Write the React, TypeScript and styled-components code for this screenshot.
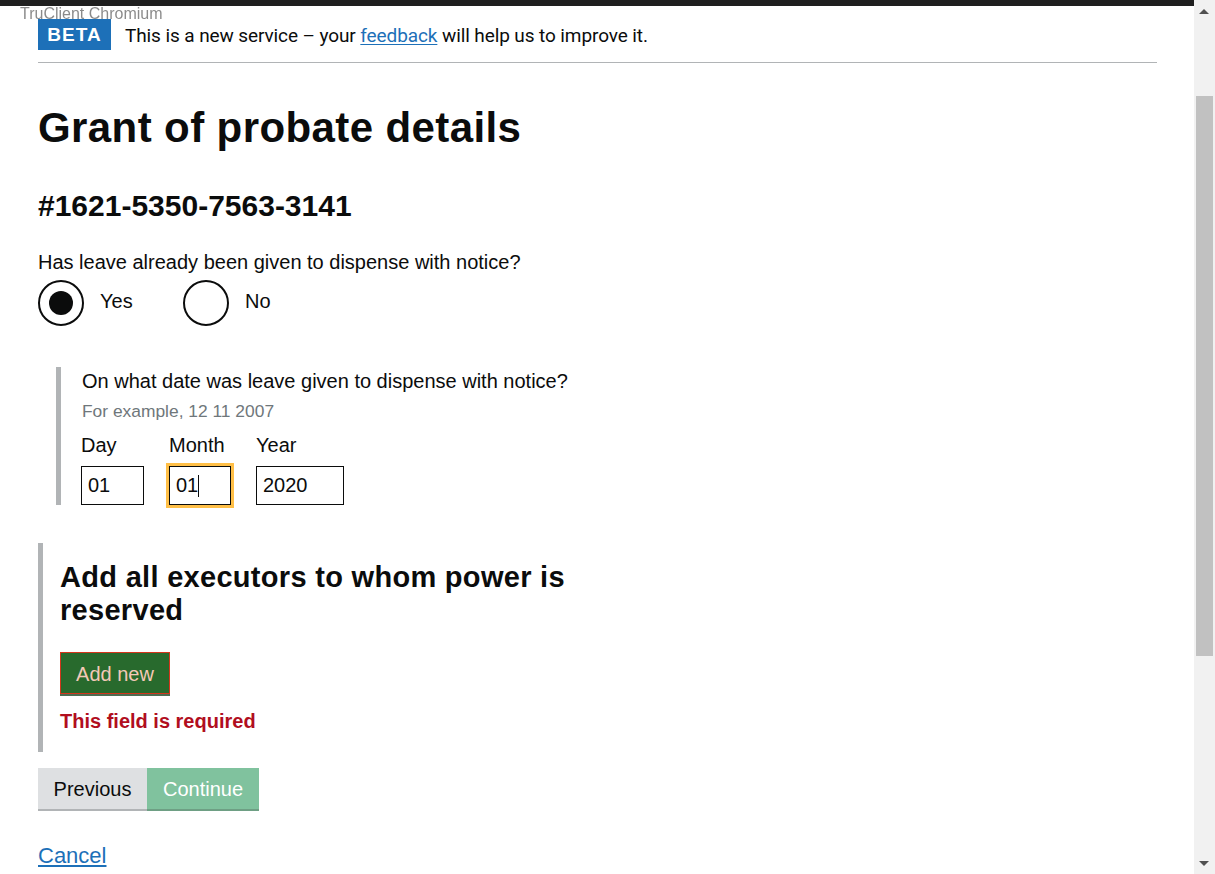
import React from "react";
import styled, { createGlobalStyle } from "styled-components";

const GlobalStyle = createGlobalStyle`
  html, body {
    margin: 0;
    padding: 0;
    background: #ffffff;
    overflow: hidden;
  }
  body {
    font-family: "Liberation Sans", Arial, sans-serif;
    color: #0b0c0c;
  }
  * { box-sizing: border-box; }
`;

const TopBar = styled.div`
  height: 6px;
  background: #1f1f1f;
`;

const Watermark = styled.div`
  position: fixed;
  left: 20px;
  top: 4px;
  font-family: "Liberation Sans", Arial, sans-serif;
  font-size: 16px;
  line-height: 20px;
  color: rgba(60, 60, 60, 0.6);
  pointer-events: none;
  z-index: 5;
`;

const Scrollbar = styled.div`
  position: fixed;
  top: 0;
  right: 0;
  width: 21px;
  height: 100vh;
  background: #f1f1f1;
  z-index: 10;
`;

const ScrollArrow = styled.div<{ $down?: boolean }>`
  position: absolute;
  left: 5px;
  ${(p) => (p.$down ? "bottom: 8px;" : "top: 9px;")}
  width: 0;
  height: 0;
  border-left: 5px solid transparent;
  border-right: 5px solid transparent;
  ${(p) =>
    p.$down
      ? "border-top: 5px solid #505050;"
      : "border-bottom: 5px solid #505050;"}
`;

const ScrollThumb = styled.div`
  position: absolute;
  left: 2px;
  top: 96px;
  width: 17px;
  height: 560px;
  background: #c1c1c1;
`;

const Page = styled.div`
  margin-right: 21px;
  padding: 0 37px 0 38px;
`;

const PhaseBanner = styled.div`
  display: flex;
  align-items: center;
  gap: 14px;
  padding: 13px 0 12px;
  border-bottom: 1px solid #b1b4b6;
`;

const Tag = styled.strong`
  display: inline-flex;
  align-items: center;
  justify-content: center;
  height: 31px;
  width: 73px;
  background: #1d70b8;
  color: #ffffff;
  font-family: "Liberation Sans", Arial, sans-serif;
  font-weight: 700;
  font-size: 19px;
  letter-spacing: 1px;
`;

const BannerText = styled.span`
  font-family: "Roboto", "Liberation Sans", sans-serif;
  font-size: 19px;
  line-height: 24px;
  letter-spacing: -0.1px;
  color: #0b0c0c;
  margin-top: 2px;
`;

const Link = styled.a`
  color: #1d70b8;
  text-decoration: underline;
  text-underline-offset: 2px;
`;

const H1 = styled.h1`
  margin: 40px 0 0;
  font-family: "Liberation Sans", Arial, sans-serif;
  font-weight: 700;
  font-size: 42px;
  line-height: 50px;
  letter-spacing: 0.4px;
`;

const CaseId = styled.h2`
  margin: 35px 0 0;
  font-weight: 700;
  font-size: 30px;
  line-height: 36px;
`;

const Question = styled.div`
  margin-top: 26px;
  font-size: 20px;
  line-height: 24px;
`;

const RadioRow = styled.div`
  display: flex;
  margin-top: 6px;
`;

const RadioItem = styled.label`
  display: flex;
  align-items: center;
  gap: 16px;
  min-width: 145px;
  font-size: 20px;
  line-height: 24px;
`;

const RadioCircle = styled.span<{ $checked?: boolean }>`
  width: 46px;
  height: 46px;
  border: 2px solid #0b0c0c;
  border-radius: 50%;
  display: flex;
  align-items: center;
  justify-content: center;
  &::after {
    content: "";
    width: 24px;
    height: 24px;
    border-radius: 50%;
    background: #0b0c0c;
    display: ${(p) => (p.$checked ? "block" : "none")};
  }
`;

const RadioText = styled.span`
  margin-top: -4px;
`;

const Conditional = styled.div`
  margin: 41px 0 0 18px;
  border-left: 5px solid #b1b4b6;
  padding-left: 20px;
`;

const FieldLabel = styled.div`
  padding-top: 2px;
  padding-left: 1px;
  font-size: 20px;
  line-height: 24px;
`;

const Hint = styled.div`
  margin-top: 7px;
  padding-left: 1px;
  font-size: 17.4px;
  line-height: 22px;
  color: #6f777b;
`;

const DateRow = styled.div`
  display: flex;
  margin-top: 11px;
`;

const DateItem = styled.div`
  display: flex;
  flex-direction: column;
  margin-right: 25px;
`;

const DateLabel = styled.label`
  font-size: 20px;
  line-height: 24px;
  margin-bottom: 9px;
`;

const InputWrap = styled.div`
  position: relative;
`;

const DateInput = styled.input<{ $w: number; $focused?: boolean }>`
  display: block;
  width: ${(p) => p.$w}px;
  height: 39px;
  border: 1px solid #0b0c0c;
  border-radius: 0;
  padding: 0 6px;
  font-family: "Liberation Sans", Arial, sans-serif;
  font-size: 20px;
  color: #0b0c0c;
  background: #fff;
  outline: ${(p) => (p.$focused ? "3px solid #ffbf47" : "none")};
  outline-offset: 0;
`;

const Caret = styled.span`
  position: absolute;
  left: 29px;
  top: 9px;
  width: 1px;
  height: 22px;
  background: #0b0c0c;
`;

const Section = styled.div`
  margin-top: 38px;
  border-left: 5px solid #b1b4b6;
  padding: 18px 0 19px 17px;
  width: 560px;
`;

const SectionHeading = styled.h2`
  margin: 0;
  font-weight: 700;
  font-size: 29px;
  line-height: 33px;
  letter-spacing: 0.3px;
`;

const AddButton = styled.button`
  margin-top: 25px;
  display: block;
  width: 110px;
  height: 42px;
  background: #286a2d;
  color: #f4c9b7;
  border: 1px solid #d4351c;
  box-shadow: 0 2px 0 #4f6b52;
  font-family: "Liberation Sans", Arial, sans-serif;
  font-size: 20px;
  padding: 2px 0 0;
  cursor: pointer;
`;

const ErrorText = styled.div`
  margin-top: 15px;
  font-weight: 700;
  font-size: 20px;
  line-height: 24px;
  color: #b10e1e;
`;

const NavRow = styled.div`
  display: flex;
  margin-top: 16px;
`;

const NavButton = styled.button<{ $primary?: boolean }>`
  height: 43px;
  width: ${(p) => (p.$primary ? 112 : 109)}px;
  border: 0;
  border-bottom: 2px solid ${(p) => (p.$primary ? "#6e9f84" : "#b1b4b6")};
  background: ${(p) => (p.$primary ? "#80c29e" : "#dee0e2")};
  color: ${(p) => (p.$primary ? "#ffffff" : "#0b0c0c")};
  font-family: "Liberation Sans", Arial, sans-serif;
  font-size: 20px;
  padding: 2px 0 0;
  cursor: pointer;
`;

const CancelLink = styled(Link)`
  display: inline-block;
  margin-top: 32px;
  font-size: 22px;
  line-height: 26px;
  text-decoration-thickness: 2px;
`;

export default function App() {
  return (
    <>
      <GlobalStyle />
      <TopBar />
      <Watermark>TruClient Chromium</Watermark>
      <Page>
        <PhaseBanner>
          <Tag>BETA</Tag>
          <BannerText>
            This is a new service – your <Link href="#">feedback</Link> will
            help us to improve it.
          </BannerText>
        </PhaseBanner>

        <H1>Grant of probate details</H1>
        <CaseId>#1621-5350-7563-3141</CaseId>

        <Question>Has leave already been given to dispense with notice?</Question>
        <RadioRow>
          <RadioItem>
            <RadioCircle $checked />
            <RadioText>Yes</RadioText>
          </RadioItem>
          <RadioItem>
            <RadioCircle />
            <RadioText>No</RadioText>
          </RadioItem>
        </RadioRow>

        <Conditional>
          <FieldLabel>On what date was leave given to dispense with notice?</FieldLabel>
          <Hint>For example, 12 11 2007</Hint>
          <DateRow>
            <DateItem>
              <DateLabel>Day</DateLabel>
              <DateInput $w={63} value="01" readOnly />
            </DateItem>
            <DateItem>
              <DateLabel>Month</DateLabel>
              <InputWrap>
                <DateInput $w={62} $focused value="01" readOnly />
                <Caret />
              </InputWrap>
            </DateItem>
            <DateItem>
              <DateLabel>Year</DateLabel>
              <DateInput $w={88} value="2020" readOnly />
            </DateItem>
          </DateRow>
        </Conditional>

        <Section>
          <SectionHeading>Add all executors to whom power is reserved</SectionHeading>
          <AddButton>Add new</AddButton>
          <ErrorText>This field is required</ErrorText>
        </Section>

        <NavRow>
          <NavButton>Previous</NavButton>
          <NavButton $primary>Continue</NavButton>
        </NavRow>

        <CancelLink href="#">Cancel</CancelLink>
      </Page>

      <Scrollbar>
        <ScrollArrow />
        <ScrollThumb />
        <ScrollArrow $down />
      </Scrollbar>
    </>
  );
}
